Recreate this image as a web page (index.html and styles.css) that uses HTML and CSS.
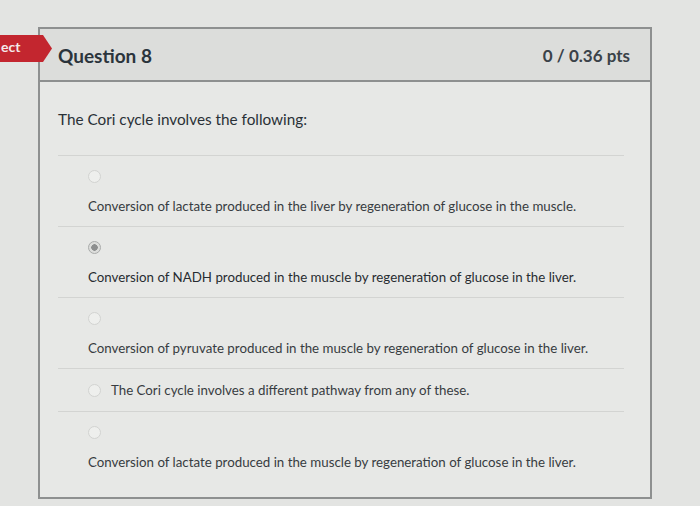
FILE: index.html
```html
<!DOCTYPE html>
<html>
<head>
<meta charset="utf-8">
<link rel="stylesheet" href="styles.css">
</head>
<body>
<div class="page">
  <div class="flag">ect</div>
  <div class="card">
    <div class="card-header">
      <span class="q-title">Question 8</span>
      <span class="q-pts">0 / 0.36 pts</span>
    </div>
    <div class="card-body">
      <p class="q-text">The Cori cycle involves the following:</p>
      <div class="answers">
        <div class="answer">
          <span class="radio"></span>
          <div class="a-text">Conversion of lactate produced in the liver by regeneration of glucose in the muscle.</div>
        </div>
        <div class="answer">
          <span class="radio checked"></span>
          <div class="a-text dark">Conversion of NADH produced in the muscle by regeneration of glucose in the liver.</div>
        </div>
        <div class="answer">
          <span class="radio"></span>
          <div class="a-text">Conversion of pyruvate produced in the muscle by regeneration of glucose in the liver.</div>
        </div>
        <div class="answer inline">
          <span class="radio"></span>
          <div class="a-text">The Cori cycle involves a different pathway from any of these.</div>
        </div>
        <div class="answer last">
          <span class="radio"></span>
          <div class="a-text">Conversion of lactate produced in the muscle by regeneration of glucose in the liver.</div>
        </div>
      </div>
    </div>
  </div>
</div>
</body>
</html>
```
FILE: styles.css
```css
* { box-sizing: border-box; }
html, body {
  margin: 0;
  padding: 0;
  background: #e3e4e2;
  font-family: Lato, "Open Sans", sans-serif;
}
.page {
  position: relative;
  width: 700px;
  height: 506px;
  padding: 27px 0 0 38px;
}
.flag {
  position: absolute;
  left: 0;
  top: 35px;
  width: 52px;
  height: 27px;
  background: #c3262f;
  color: #f4e9ea;
  font-size: 14px;
  font-weight: 700;
  line-height: 24px;
  padding-left: 1px;
  clip-path: polygon(0 0, 43px 0, 52px 50%, 43px 100%, 0 100%);
}
.card {
  width: 614px;
  height: 472px;
  border: 2px solid #8e9090;
  background: #e7e8e6;
  display: flex;
  flex-direction: column;
}
.card-header {
  height: 53px;
  flex: none;
  background: #dcdddb;
  border-bottom: 2px solid #8e9090;
  display: flex;
  align-items: center;
  justify-content: space-between;
  padding: 1px 20px 0 18px;
}
.q-title {
  font-size: 19px;
  font-weight: 700;
  color: #2b343c;
}
.q-pts {
  font-size: 17px;
  font-weight: 700;
  color: #3a4249;
}
.card-body {
  padding: 0 26px 0 18px;
}
.q-text {
  margin: 27px 0 0;
  font-size: 15.3px;
  line-height: 20px;
  color: #2a3137;
  height: 46px;
}
.answer {
  border-top: 1px solid #d3d4d2;
  padding: 14px 0 0 30px;
  height: 71px;
}
.answer.inline {
  display: flex;
  align-items: center;
  padding: 0 0 0 30px;
  height: 43px;
}
.answer.inline .radio {
  margin: 0 10px 0 0;
}
.answer.last {
  height: 66px;
}
.radio {
  display: block;
  width: 13px;
  height: 13px;
  border-radius: 50%;
  border: 1px solid #d2d3d1;
  background: #eeefed;
}
.radio.checked {
  border: 1px solid #a9abaa;
  background: radial-gradient(circle, #8d8f8f 0 3px, #dcdddb 3.5px);
}
.a-text {
  margin-top: 14px;
  font-size: 13.3px;
  line-height: 18px;
  color: #373c41;
  white-space: nowrap;
}
.answer.inline .a-text {
  margin-top: 0;
}
.a-text.dark {
  color: #272c31;
}
```
